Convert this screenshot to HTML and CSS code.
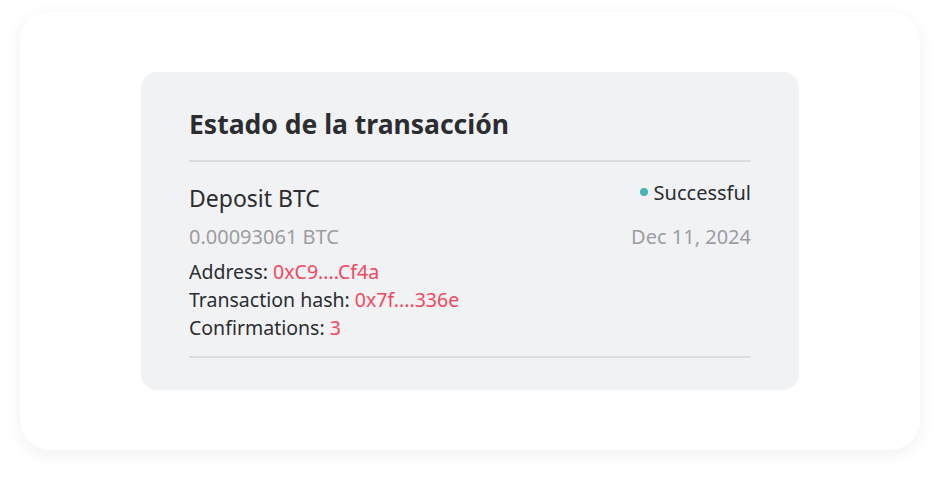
FILE: index.html
```html
<!DOCTYPE html>
<html lang="es">
<head>
<meta charset="utf-8">
<link rel="stylesheet" href="styles.css">
</head>
<body>
<div class="card">
  <section class="panel">
    <h1 class="title">Estado de la transacción</h1>
    <div class="rule"></div>
    <div class="row top">
      <div class="name">Deposit BTC</div>
      <div class="status"><span class="dot"></span>Successful</div>
    </div>
    <div class="row sub">
      <div>0.00093061 BTC</div>
      <div>Dec 11, 2024</div>
    </div>
    <div class="details">
      <div>Address: <span class="red">0xC9....Cf4a</span></div>
      <div>Transaction hash: <span class="red">0x7f....336e</span></div>
      <div>Confirmations: <span class="red">3</span></div>
    </div>
    <div class="rule bottom"></div>
  </section>
</div>
</body>
</html>
```
FILE: styles.css
```css
html, body {
  margin: 0;
  padding: 0;
  background: #ffffff;
}
body {
  font-family: "Noto Sans", "Open Sans", sans-serif;
  color: #2b2d31;
  padding: 12px 20px 28px;
}
.card {
  height: 438px;
  border-radius: 30px;
  background: #ffffff;
  box-shadow: 0 4px 18px rgba(0, 0, 0, 0.06);
  display: flex;
  align-items: center;
  justify-content: center;
}
.panel {
  width: 658px;
  height: 318px;
  box-sizing: border-box;
  background: #f1f2f4;
  border-radius: 16px;
  padding: 34px 48px 0;
}
.title {
  margin: 0;
  font-size: 26.5px;
  line-height: 36px;
  font-weight: 700;
  color: #2b2d31;
}
.rule {
  height: 2px;
  background: #dcdde1;
  margin-top: 18px;
}
.rule.bottom {
  margin-top: 14px;
}
.row {
  display: flex;
  justify-content: space-between;
}
.row.top {
  margin-top: 22px;
  align-items: flex-start;
}
.name {
  font-size: 23px;
  line-height: 28px;
}
.status {
  font-size: 20px;
  line-height: 18px;
  display: flex;
  align-items: flex-start;
  gap: 6px;
}
.dot {
  width: 8px;
  height: 8px;
  margin-top: 4px;
  border-radius: 50%;
  background: #45b5b3;
}
.row.sub {
  margin-top: 13px;
  font-size: 20px;
  line-height: 24px;
  color: #9c9da2;
}
.details {
  margin-top: 9px;
  font-size: 19.5px;
  line-height: 28px;
  color: #2b2d31;
}
.red {
  color: #f6465d;
}
```
